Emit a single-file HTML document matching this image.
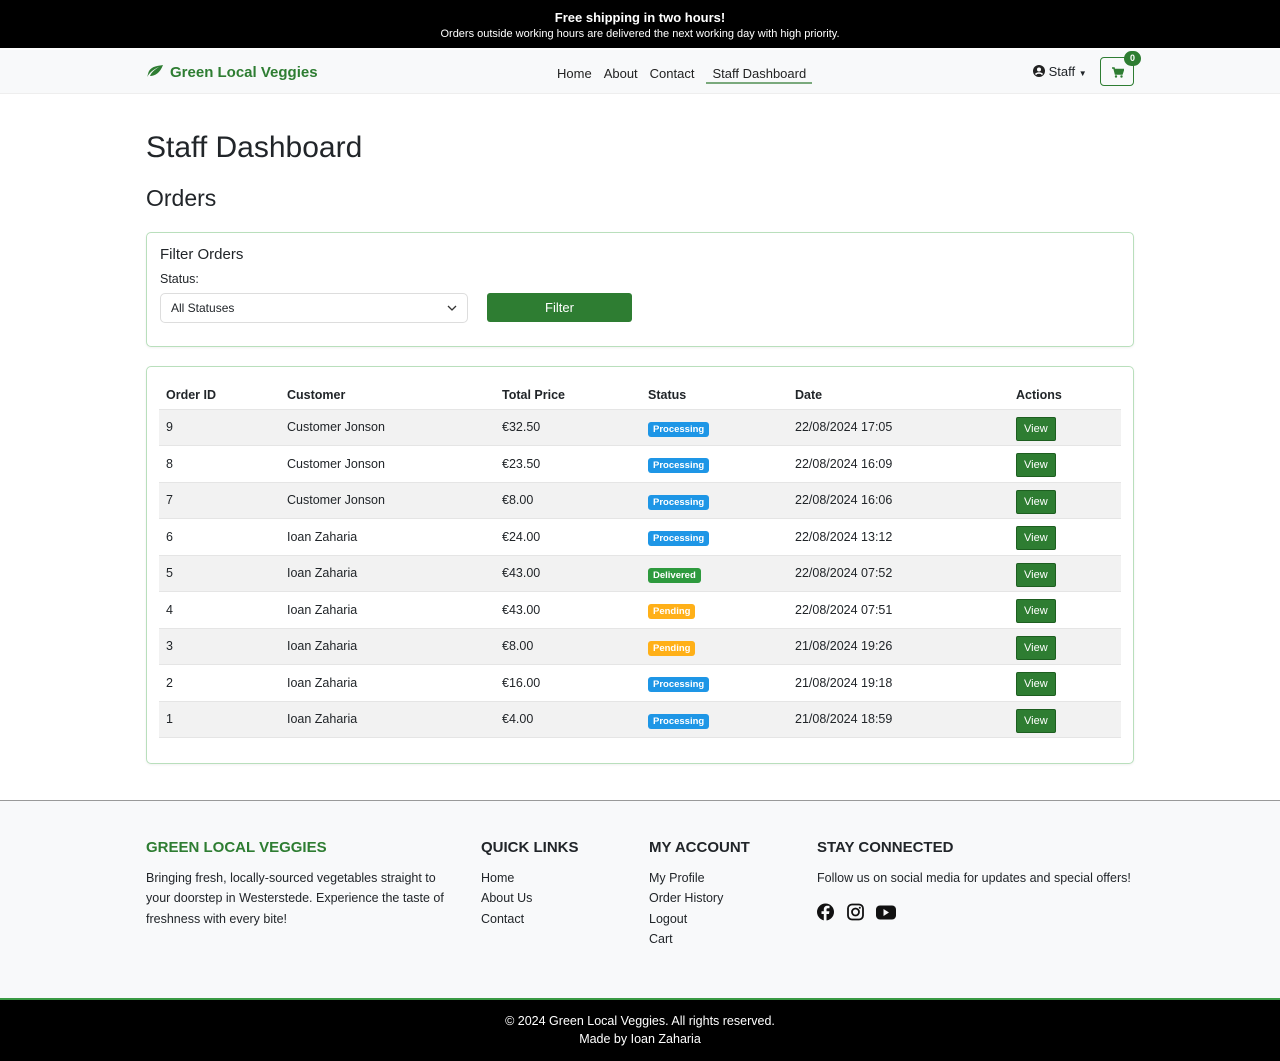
<!DOCTYPE html>
<html><head><meta charset="utf-8"><style>
*{box-sizing:border-box;margin:0;padding:0}
body{width:1280px;height:1061px;font-family:"Liberation Sans",Arial,sans-serif;color:#212529;background:#fff;font-size:13px;position:relative;overflow:hidden}
.top{position:absolute;left:0;top:0;width:1280px;height:48px;background:#000;color:#fff;text-align:center}
.top b{display:block;font-size:13px;padding-top:10px}
.top span{display:block;font-size:11px;margin-top:3px}
.nav{position:absolute;top:48px;left:0;width:1280px;height:46px;background:#f8f9fa;border-top:2px solid #fff;border-bottom:1px solid #eee}
.logo{position:absolute;left:146px;top:14px;color:#2e7d32;font-weight:bold;font-size:15px}
.links{position:absolute;left:557px;top:16px;font-size:13px}
.links a{margin-right:12px;color:#222}
.links a.act{border-bottom:2px solid #7aa97c;padding:0 6px 1px}
.staff{position:absolute;left:1033px;top:14px;font-size:13px}
.cart{position:absolute;left:1100px;top:7px;width:34px;height:29px;border:1px solid #2e7d32;border-radius:4px}
.badge0{position:absolute;left:1124px;top:1px;width:17px;height:15px;border-radius:8px;background:#2e7d32;color:#fff;font-size:9px;font-weight:bold;text-align:center;line-height:15px}
h1{position:absolute;left:146px;top:131px;font-size:30px;font-weight:normal}
h2{position:absolute;left:146px;top:185px;font-size:23px;font-weight:normal}
.card{position:absolute;left:146px;width:988px;border:1px solid #b9dfbc;border-radius:5px;box-shadow:0 1px 2px rgba(0,0,0,.06)}
.sel{position:absolute;left:13px;top:60px;width:308px;height:30px;border:1px solid #ddd;border-radius:5px;padding:7px 10px;font-size:12px}
.btn{position:absolute;left:340px;top:60px;width:145px;height:29px;background:#2e7d32;border-radius:3px;color:#fff;text-align:center;line-height:29px;font-size:13px}
table{position:absolute;left:12px;top:12px;width:962px;border-collapse:collapse;font-size:12.5px}
th{text-align:left;font-weight:bold;height:30px;padding:2px 7px 0;border-bottom:1px solid #e5e5e5}
td{height:36.5px;padding:0 7px;border-bottom:1px solid #e5e5e5}
tr:nth-child(even) td{background:#f2f2f2}
.b{display:inline-block;color:#fff;font-size:9.5px;font-weight:bold;padding:2px 5px;border-radius:3px;margin-top:4px}
.pr{background:#1e96e6}.dl{background:#2e9a3e}.pd{background:#ffb018}
.v{display:inline-block;background:#2e7d32;color:#fff;font-size:11px;padding:5px 7px;border-radius:2px;border:1px solid #1d5e20;margin-top:3px}
.foot{position:absolute;left:0;top:800px;width:1280px;height:198px;background:#f8f9fa;border-top:1px solid #999}
.foot h4{position:absolute;top:38px;font-size:15px;font-weight:bold}
.foot p,.foot ul{position:absolute;top:67px;font-size:12.5px;line-height:20.3px;list-style:none}
.bot{position:absolute;left:0;top:998px;width:1280px;height:63px;background:#000;color:#fff;text-align:center;font-size:12.5px;border-top:2px solid #3a9a44;padding-top:12px;line-height:18px}
</style></head><body>
<div class="top"><b>Free shipping in two hours!</b><span>Orders outside working hours are delivered the next working day with high priority.</span></div>
<div class="nav">
<div class="logo"><svg width="18" height="14" viewBox="0 0 18 14" style="vertical-align:-1px;margin-right:6px"><path d="M1 13C4 8 8 5 13 3C8 6 5 9 4 12C9 12 14 9 17 1C12 2 6 2 3 7C2 9 2 11 1 13Z" fill="#2e7d32"/></svg>Green Local Veggies</div>
<div class="links"><a>Home</a><a>About</a><a>Contact</a><a class="act">Staff Dashboard</a></div>
<div class="staff"><svg width="12" height="12" viewBox="0 0 12 12" style="vertical-align:-1px"><circle cx="6" cy="6" r="6" fill="#222"/><circle cx="6" cy="4.5" r="2" fill="#fff"/><path d="M2.5 9.5C4 7.5 8 7.5 9.5 9.5" stroke="#fff" stroke-width="1.5" fill="none"/></svg> Staff <span style="font-size:8px">▼</span></div>
<div class="cart"><svg width="12" height="11" viewBox="0 0 12 11" style="position:absolute;left:11px;top:9px"><path d="M0 1H2L3.5 7H10L11.5 2.5H3" stroke="#2e7d32" stroke-width="1.6" fill="#2e7d32"/><circle cx="4" cy="9.5" r="1.2" fill="#2e7d32"/><circle cx="9.5" cy="9.5" r="1.2" fill="#2e7d32"/></svg></div>
<div class="badge0">0</div>
</div>
<h1>Staff Dashboard</h1>
<h2>Orders</h2>
<div class="card" style="top:232px;height:115px">
<div style="position:absolute;left:13px;top:13px;font-size:15px">Filter Orders</div>
<div style="position:absolute;left:13px;top:39px;font-size:12.5px">Status:</div>
<div class="sel">All Statuses<svg width="10" height="6" style="position:absolute;right:10px;top:11px"><path d="M1 1L5 5L9 1" stroke="#333" fill="none" stroke-width="1.3"/></svg></div>
<div class="btn">Filter</div>
</div>
<div class="card" style="top:366px;height:398px">
<table>
<tr><th style="width:121px">Order ID</th><th style="width:215px">Customer</th><th style="width:146px">Total Price</th><th style="width:147px">Status</th><th style="width:221px">Date</th><th>Actions</th></tr>
<tr><td>9</td><td>Customer Jonson</td><td>€32.50</td><td><span class="b pr">Processing</span></td><td>22/08/2024 17:05</td><td><span class="v">View</span></td></tr>
<tr><td>8</td><td>Customer Jonson</td><td>€23.50</td><td><span class="b pr">Processing</span></td><td>22/08/2024 16:09</td><td><span class="v">View</span></td></tr>
<tr><td>7</td><td>Customer Jonson</td><td>€8.00</td><td><span class="b pr">Processing</span></td><td>22/08/2024 16:06</td><td><span class="v">View</span></td></tr>
<tr><td>6</td><td>Ioan Zaharia</td><td>€24.00</td><td><span class="b pr">Processing</span></td><td>22/08/2024 13:12</td><td><span class="v">View</span></td></tr>
<tr><td>5</td><td>Ioan Zaharia</td><td>€43.00</td><td><span class="b dl">Delivered</span></td><td>22/08/2024 07:52</td><td><span class="v">View</span></td></tr>
<tr><td>4</td><td>Ioan Zaharia</td><td>€43.00</td><td><span class="b pd">Pending</span></td><td>22/08/2024 07:51</td><td><span class="v">View</span></td></tr>
<tr><td>3</td><td>Ioan Zaharia</td><td>€8.00</td><td><span class="b pd">Pending</span></td><td>21/08/2024 19:26</td><td><span class="v">View</span></td></tr>
<tr><td>2</td><td>Ioan Zaharia</td><td>€16.00</td><td><span class="b pr">Processing</span></td><td>21/08/2024 19:18</td><td><span class="v">View</span></td></tr>
<tr><td>1</td><td>Ioan Zaharia</td><td>€4.00</td><td><span class="b pr">Processing</span></td><td>21/08/2024 18:59</td><td><span class="v">View</span></td></tr>
</table>
</div>
<div class="foot">
<h4 style="left:146px;color:#2e7d32">GREEN LOCAL VEGGIES</h4>
<p style="left:146px;width:305px">Bringing fresh, locally-sourced vegetables straight to your doorstep in Westerstede. Experience the taste of freshness with every bite!</p>
<h4 style="left:481px">QUICK LINKS</h4>
<ul style="left:481px"><li>Home</li><li>About Us</li><li>Contact</li></ul>
<h4 style="left:649px">MY ACCOUNT</h4>
<ul style="left:649px"><li>My Profile</li><li>Order History</li><li>Logout</li><li>Cart</li></ul>
<h4 style="left:817px">STAY CONNECTED</h4>
<p style="left:817px">Follow us on social media for updates and special offers!</p>
<svg style="position:absolute;left:817px;top:102px" width="80" height="18" viewBox="0 0 80 18">
<circle cx="8.5" cy="9" r="8.5" fill="#111"/><path d="M9.5 18V11H12L12.4 8.3H9.5V6.6C9.5 5.8 9.8 5.3 10.9 5.3H12.5V2.9C11.8 2.8 11 2.7 10.3 2.7C8.2 2.7 6.8 4 6.8 6.3V8.3H4.5V11H6.8V18Z" fill="#f8f9fa"/>
<rect x="31" y="1.5" width="15" height="15" rx="4" fill="none" stroke="#111" stroke-width="1.8"/><circle cx="38.5" cy="9" r="3.5" fill="none" stroke="#111" stroke-width="1.8"/><circle cx="42.8" cy="4.8" r="1" fill="#111"/>
<rect x="59" y="2.5" width="20" height="14" rx="4" fill="#111"/><path d="M66.5 6V13L72 9.5Z" fill="#f8f9fa"/>
</svg>
</div>
<div class="bot">© 2024 Green Local Veggies. All rights reserved.<br>Made by Ioan Zaharia</div>
</body></html>
